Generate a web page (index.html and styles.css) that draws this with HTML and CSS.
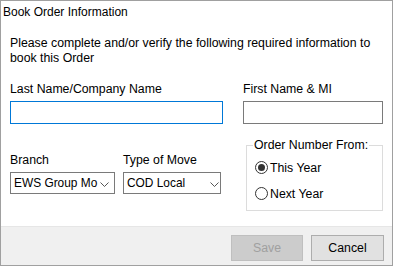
FILE: index.html
```html
<!DOCTYPE html>
<html lang="en">
<head>
    <meta charset="UTF-8">
    <meta name="viewport" content="width=device-width, initial-scale=1.0">
    <title>Book Order Information</title>
    <link rel="stylesheet" href="styles.css">
</head>
<body>
    <div class="dialog">
        <!-- Title -->
        <div class="title">Book Order Information</div>

        <div class="content">
            <p class="intro">Please complete and/or verify the following required information to book this Order</p>

            <!-- Name fields -->
            <div class="row names">
                <div class="field last-name">
                    <label class="label">Last Name/Company Name</label>
                    <input class="textbox focused" type="text">
                </div>
                <div class="field first-name">
                    <label class="label">First Name &amp; MI</label>
                    <input class="textbox" type="text">
                </div>
            </div>

            <!-- Branch, move type, order number -->
            <div class="row options">
                <div class="selects">
                    <div class="field">
                        <label class="label">Branch</label>
                        <div class="select branch">
                            <span class="select-text">EWS Group Mo</span>
                            <svg class="chevron" width="9" height="5" viewBox="0 0 9 5"><path d="M0.5 0.5 L4.5 4.5 L8.5 0.5" fill="none" stroke="#555" stroke-width="1"/></svg>
                        </div>
                    </div>
                    <div class="field">
                        <label class="label">Type of Move</label>
                        <div class="select move-type">
                            <span class="select-text">COD Local</span>
                            <svg class="chevron" width="9" height="5" viewBox="0 0 9 5"><path d="M0.5 0.5 L4.5 4.5 L8.5 0.5" fill="none" stroke="#555" stroke-width="1"/></svg>
                        </div>
                    </div>
                </div>

                <fieldset class="group">
                    <legend class="legend">Order Number From:</legend>
                    <div class="radio">
                        <span class="circle checked"></span>
                        <span>This Year</span>
                    </div>
                    <div class="radio">
                        <span class="circle"></span>
                        <span>Next Year</span>
                    </div>
                </fieldset>
            </div>
        </div>

        <!-- Buttons -->
        <div class="footer">
            <button class="button" disabled>Save</button>
            <button class="button">Cancel</button>
        </div>
    </div>
</body>
</html>
```

FILE: styles.css
```css
/* General Styles */
body {
    margin: 0;
    font-family: "Liberation Sans", Arial, sans-serif;
    font-size: 12px;
    color: #000;
    background-color: #fff;
}

.dialog {
    width: 393px;
    height: 266px;
    box-sizing: border-box;
    border: 1px solid #a0a0a0;
    display: flex;
    flex-direction: column;
    background-color: #fff;
}

.title {
    padding: 3px 0 0 2px;
    line-height: 16px;
    height: 16px;
}

.content {
    flex: 1;
    padding: 0 9px 0 9px;
    font-size: 12.3px;
}

.intro {
    margin: 16px 0 0 0;
    line-height: 15px;
}

.row {
    display: flex;
}

.names {
    margin-top: 16px;
    gap: 20px;
}

.field {
    display: flex;
    flex-direction: column;
}

.label {
    line-height: 15px;
    margin-bottom: 4px;
}

.textbox {
    height: 23px;
    box-sizing: border-box;
    border: 1px solid #7a7a7a;
    margin: 0;
    padding: 0 3px;
    font: inherit;
    outline: none;
}

.textbox.focused {
    border-color: #0078d7;
}

.last-name .textbox {
    width: 213px;
}

.first-name .textbox {
    width: 140px;
}

/* Second row */
.options {
    margin-top: 21px;
}

.selects {
    display: flex;
    gap: 8px;
    padding-top: 8px;
}

.select {
    height: 22px;
    box-sizing: border-box;
    border: 1px solid #7a7a7a;
    display: flex;
    align-items: center;
    padding-left: 3px;
    position: relative;
    font-size: 11.9px;
}

.select-text {
    white-space: nowrap;
}

.select.branch {
    width: 105px;
}

.select.move-type {
    width: 98px;
}

.chevron {
    position: absolute;
    top: 9px;
}

.branch .chevron {
    right: 5px;
}

.move-type .chevron {
    right: 1px;
}

/* Order number group */
.group {
    margin: -7px 0 0 25px;
    padding: 0 0 0 6px;
    width: 139px;
    height: 73px;
    box-sizing: border-box;
    border: 1px solid #dcdcdc;
    min-width: 0;
}

.legend {
    padding: 0 1px;
    line-height: 14px;
}

.radio {
    display: flex;
    align-items: center;
    gap: 2px;
    height: 15px;
    margin-top: 8px;
    margin-left: 2px;
    font-size: 12.3px;
}

.radio + .radio {
    margin-top: 11px;
}

.circle {
    width: 13px;
    height: 13px;
    box-sizing: border-box;
    border: 1px solid #333;
    border-radius: 50%;
    display: flex;
    align-items: center;
    justify-content: center;
}

.circle.checked::after {
    content: "";
    width: 7px;
    height: 7px;
    border-radius: 50%;
    background-color: #333;
}

/* Footer */
.footer {
    height: 39px;
    box-sizing: border-box;
    background-color: #f0f0f0;
    border-top: 1px solid #e6e6e6;
    display: flex;
    justify-content: flex-end;
    align-items: flex-start;
    gap: 8px;
    padding: 8px 8px 0 0;
}

.button {
    width: 73px;
    height: 26px;
    margin: 0;
    font: inherit;
    font-size: 12.3px;
    color: #000;
    background-color: #e1e1e1;
    border: 1px solid #adadad;
}

.button:disabled {
    width: 72px;
    color: #a0a0a0;
    background-color: #cccccc;
    border-color: #bfbfbf;
}
```
